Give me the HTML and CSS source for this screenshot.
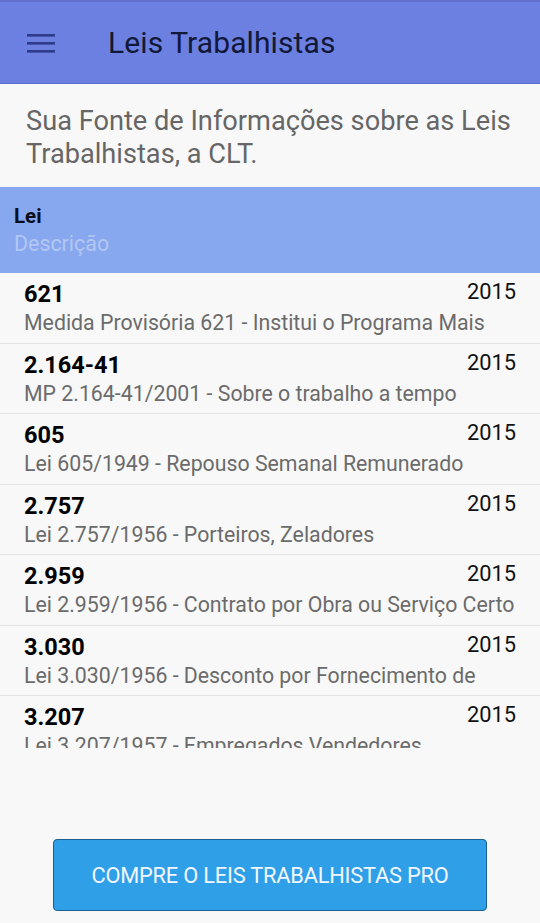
FILE: index.html
```html
<!DOCTYPE html>
<html lang="pt">
<head>
<meta charset="utf-8">
<link rel="stylesheet" href="styles.css">
</head>
<body>
<div class="app">
  <header class="toolbar">
    <button class="menu" aria-label="menu">
      <svg width="28" height="20" viewBox="0 0 28 20"><rect x="0" y="1" width="28" height="2.6" fill="#2e3b86"/><rect x="0" y="9" width="28" height="2.6" fill="#2e3b86"/><rect x="0" y="17" width="28" height="2.6" fill="#2e3b86"/></svg>
    </button>
    <h1 class="title">Leis Trabalhistas</h1>
  </header>
  <p class="intro">Sua Fonte de Informações sobre as Leis Trabalhistas, a CLT.</p>
  <div class="band">
    <div class="band-title">Lei</div>
    <div class="band-sub">Descrição</div>
  </div>
  <ul class="list">
    <li class="row"><div class="row-top"><span class="num">621</span><span class="year">2015</span></div><div class="desc">Medida Provisória 621 - Institui o Programa Mais</div></li>
    <li class="row"><div class="row-top"><span class="num">2.164-41</span><span class="year">2015</span></div><div class="desc">MP 2.164-41/2001 - Sobre o trabalho a tempo</div></li>
    <li class="row"><div class="row-top"><span class="num">605</span><span class="year">2015</span></div><div class="desc">Lei 605/1949 - Repouso Semanal Remunerado</div></li>
    <li class="row"><div class="row-top"><span class="num">2.757</span><span class="year">2015</span></div><div class="desc">Lei 2.757/1956 - Porteiros, Zeladores</div></li>
    <li class="row"><div class="row-top"><span class="num">2.959</span><span class="year">2015</span></div><div class="desc">Lei 2.959/1956 - Contrato por Obra ou Serviço Certo</div></li>
    <li class="row"><div class="row-top"><span class="num">3.030</span><span class="year">2015</span></div><div class="desc">Lei 3.030/1956 - Desconto por Fornecimento de</div></li>
    <li class="row"><div class="row-top"><span class="num">3.207</span><span class="year">2015</span></div><div class="desc">Lei 3.207/1957 - Empregados Vendedores</div></li>
  </ul>
  <div class="footer">
    <button class="buy">COMPRE O LEIS TRABALHISTAS PRO</button>
  </div>
</div>
</body>
</html>
```
FILE: styles.css
```css
* { box-sizing: border-box; }
html, body { margin: 0; padding: 0; }
body {
  background: #f8f8f8;
  font-family: Roboto, "Noto Sans", "Liberation Sans", sans-serif;
  width: 540px;
  height: 923px;
  overflow: hidden;
}
.app { display: flex; flex-direction: column; height: 923px; }
.toolbar {
  height: 84px;
  background: #6b80e0;
  border-top: 2px solid #5f70cf;
  border-bottom: 1px solid #5b6dca;
  display: flex;
  align-items: center;
  padding-left: 27px;
  flex-shrink: 0;
}
.menu {
  background: none; border: 0; padding: 0; margin: 0;
  width: 28px; height: 20px; display: block;
}
.menu svg { display: block; }
.title {
  margin: 0 0 0 53px;
  font-size: 30px;
  font-weight: 400;
  color: #121838;
  letter-spacing: 0.1px;
}
.intro {
  margin: 0;
  padding: 21px 10px 16px 26px;
  font-size: 27.2px;
  line-height: 33px;
  color: #666;
  flex-shrink: 0;
}
.band {
  background: #87a8ee;
  height: 86px;
  padding: 15px 14px 0 14px;
  flex-shrink: 0;
}
.band-title { font-size: 20.5px; font-weight: 700; color: #0b0e1a; line-height: 28px; }
.band-sub { font-size: 21.4px; color: #b3c7f3; line-height: 28px; }
.list {
  list-style: none;
  margin: 0;
  padding: 0;
  height: 475px;
  overflow: hidden;
  flex-shrink: 0;
}
.row {
  height: 70.5px;
  padding: 7px 24px 0 24px;
  border-bottom: 1.5px solid #e2e2e2;
}
.row-top { display: flex; justify-content: space-between; align-items: flex-start; }
.num { font-size: 23.5px; font-weight: 700; color: #000; line-height: 28px; }
.year { font-size: 21.8px; color: #111; line-height: 24px; }
.desc { font-size: 21.3px; color: #6b6b6b; line-height: 30px; white-space: nowrap; overflow: hidden; }
.footer {
  flex: 1;
  display: flex;
  align-items: flex-start;
  justify-content: center;
  padding-top: 91px;
}
.buy {
  width: 434px;
  height: 72px;
  background: #2f9fe8;
  border: 1px solid #1c5f91;
  border-radius: 4px;
  color: #f2f7ff;
  font-family: Roboto, "Noto Sans", sans-serif;
  font-size: 21.8px;
  letter-spacing: -0.2px;
}
```
